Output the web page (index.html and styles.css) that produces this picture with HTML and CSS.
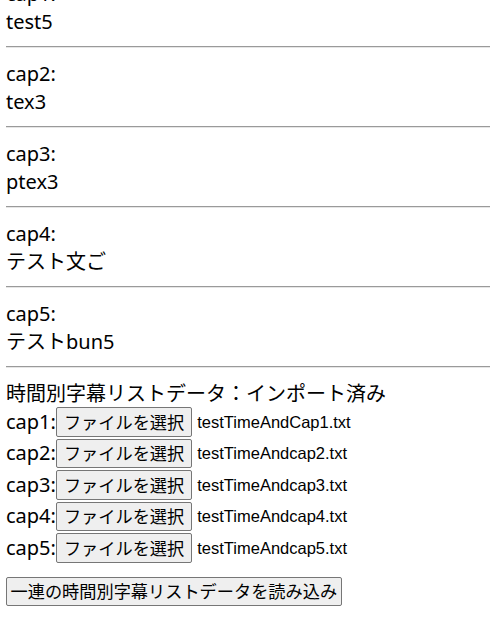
FILE: index.html
```html
<!DOCTYPE html>
<html lang="ja">
<head>
<meta charset="utf-8">
<title>字幕</title>
<link rel="stylesheet" href="styles.css">
</head>
<body>
<div class="page">
  <div class="cap first">cap1:<br>test5</div>
  <hr class="rule">
  <div class="cap">cap2:<br>tex3</div>
  <hr class="rule">
  <div class="cap">cap3:<br>ptex3</div>
  <hr class="rule">
  <div class="cap">cap4:<br>テスト文ご</div>
  <hr class="rule">
  <div class="cap">cap5:<br>テストbun5</div>
  <hr class="rule">
  <div class="status">時間別字幕リストデータ：インポート済み</div>
  <div class="rows">
    <div class="row"><span class="label">cap1:</span><button class="file-btn" type="button">ファイルを選択</button><span class="fname">testTimeAndCap1.txt</span></div>
    <div class="row"><span class="label">cap2:</span><button class="file-btn" type="button">ファイルを選択</button><span class="fname">testTimeAndcap2.txt</span></div>
    <div class="row"><span class="label">cap3:</span><button class="file-btn" type="button">ファイルを選択</button><span class="fname">testTimeAndcap3.txt</span></div>
    <div class="row"><span class="label">cap4:</span><button class="file-btn" type="button">ファイルを選択</button><span class="fname">testTimeAndcap4.txt</span></div>
    <div class="row"><span class="label">cap5:</span><button class="file-btn" type="button">ファイルを選択</button><span class="fname">testTimeAndcap5.txt</span></div>
  </div>
  <button class="load-btn" type="button">一連の時間別字幕リストデータを読み込み</button>
</div>
</body>
</html>
```

FILE: styles.css
```css
html, body {
  margin: 0;
  padding: 0;
  background: #ffffff;
}

body {
  font-family: "Noto Sans", "Noto Sans CJK JP", sans-serif;
  font-size: 20px;
  color: #000000;
  overflow: hidden;
}

.page {
  padding-left: 6px;
}

.cap {
  line-height: 28px;
  padding: 12px 0 10px;
}

.cap.first {
  margin-top: -32px;
}

.rule {
  margin: 0;
  height: 0;
  border: 0;
  border-top: 1px solid #9a9a9a;
  border-bottom: 1px solid #e6e6e6;
}

.status {
  line-height: 25px;
  margin-top: 13px;
}

.rows {
  display: flex;
  flex-direction: column;
}

.row {
  display: flex;
  align-items: center;
  height: 31.5px;
  line-height: 28px;
}

.file-btn,
.load-btn {
  font-family: "Noto Sans CJK JP", sans-serif;
  font-size: 17.2px;
  color: #000000;
  background: #efefef;
  border: 1px solid #767676;
  border-radius: 2px;
  height: 29.5px;
  line-height: 26px;
  margin: 0;
}

.file-btn {
  padding: 0 7px;
}

.fname {
  font-family: "Liberation Sans", Arial, sans-serif;
  font-size: 16.5px;
  margin-left: 5px;
}

.load-btn {
  display: block;
  margin-top: 13px;
  padding: 0 3.5px;
}
```
